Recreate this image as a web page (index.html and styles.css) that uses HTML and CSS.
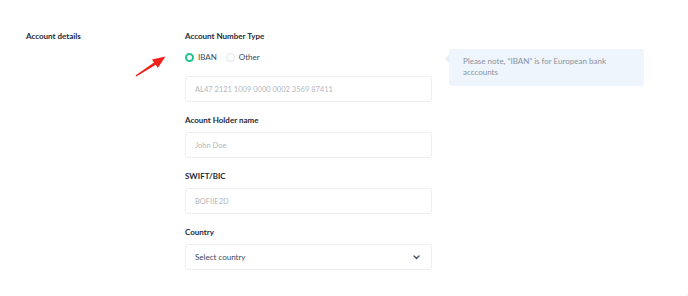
FILE: index.html
```html
<!DOCTYPE html>
<html lang="en">
<head>
  <meta charset="UTF-8" />
  <title>Account details</title>
  <link rel="stylesheet" href="styles.css">
</head>
<body>
  <div class="page">
    <h3 class="section-title">Account details</h3>

    <form class="form">
      <div class="field">
        <label class="label">Account Number Type</label>
        <div class="radios">
          <label class="radio"><span class="dot checked"></span>IBAN</label>
          <label class="radio"><span class="dot"></span>Other</label>
        </div>
        <input class="input" type="text" placeholder="AL47 2121 1009 0000 0002 3569 87411" />
      </div>

      <div class="field">
        <label class="label">Acount Holder name</label>
        <input class="input" type="text" placeholder="John Doe" />
      </div>

      <div class="field">
        <label class="label">SWIFT/BIC</label>
        <input class="input" type="text" placeholder="BOFIIE2D" />
      </div>

      <div class="field">
        <label class="label">Country</label>
        <div class="select">
          <span>Select country</span>
          <svg width="7" height="5" viewBox="0 0 7 5"><path d="M1 1l2.5 2.5 2.5-2.5" fill="none" stroke="#3b4a5c" stroke-width="1.3" stroke-linecap="round" stroke-linejoin="round"/></svg>
        </div>
      </div>
    </form>

    <div class="note">Please note, “IBAN” is for European bank acccounts</div>
  </div>

  <!-- annotation arrow -->
  <svg class="arrow" width="40" height="30" viewBox="0 0 40 30">
    <path d="M35.5 6.5 L22 9.6 L24 12.6 L5.5 25.4 L6.4 26.6 L25.8 14.8 L27.8 17.9 Z" fill="#ef2119"/>
  </svg>

  <div class="chat-btn"></div>
</body>
</html>
```

FILE: styles.css
```css
* {
  box-sizing: border-box;
  margin: 0;
  padding: 0;
}
body {
  font-family: Lato, 'Open Sans', sans-serif;
  background: #fff;
  color: #1d2a3a;
  overflow: hidden;
}
.page {
  display: grid;
  grid-template-columns: 142px 247px 195px;
  column-gap: 17px;
  padding: 30px 0 0 26px;
  align-items: start;
}
.section-title {
  font-size: 8px;
  font-weight: 700;
  line-height: 12px;
}
.field {
  display: flex;
  flex-direction: column;
  margin-bottom: 12px;
}
.label {
  font-size: 8px;
  font-weight: 700;
  line-height: 12px;
  margin-bottom: 6px;
}
.radios {
  display: flex;
  gap: 9px;
  margin: 3px 0 13px;
  height: 12px;
  align-items: center;
}
.radio {
  display: flex;
  align-items: center;
  gap: 4px;
  font-size: 8px;
  color: #3b4859;
}
.dot {
  width: 9px;
  height: 9px;
  border-radius: 50%;
  border: 1px solid #dfe3e8;
  background: #fff;
}
.dot.checked {
  border: 2.5px solid #1fc38d;
}
.input, .select {
  height: 26px;
  width: 100%;
  border: 1px solid #eceef1;
  border-radius: 3px;
  padding: 0 9px;
  font-family: inherit;
  font-size: 7.5px;
  color: #3b4859;
  outline: none;
}
.input::placeholder {
  color: #b2b7be;
}
.select {
  display: flex;
  align-items: center;
  justify-content: space-between;
  font-size: 8px;
  padding-right: 11px;
}
.note {
  position: relative;
  margin-top: 19px;
  background: #eef5fd;
  border-radius: 3px;
  padding: 7px 14px 8px;
  font-size: 8px;
  line-height: 10.5px;
  color: #8a919b;
  min-height: 37px;
}
.note::before {
  content: "";
  position: absolute;
  left: -4px;
  top: 6px;
  border: 4px solid transparent;
  border-left: 0;
  border-right-color: #e6eef7;
}
.arrow {
  position: absolute;
  left: 130px;
  top: 50px;
}
.chat-btn {
  position: fixed;
  left: 683px;
  top: 283px;
  width: 56px;
  height: 56px;
  border-radius: 50%;
  background: #16985a;
}
```
